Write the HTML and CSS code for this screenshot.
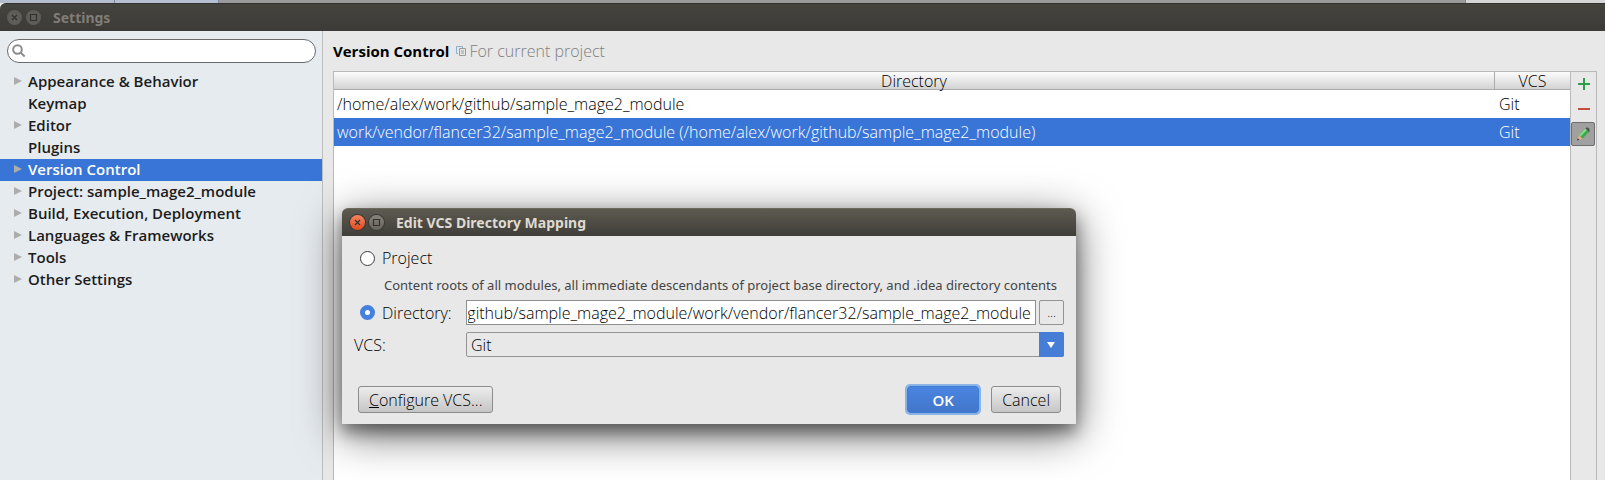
FILE: index.html
```html
<!DOCTYPE html>
<html lang="en">
<head>
<meta charset="utf-8">
<title>Settings</title>
<link rel="stylesheet" href="styles.css">
</head>
<body>
<div class="desktop">
  <div class="desktop-strip"><span class="strip-tab"></span><span class="strip-tab strip-tab-wide"></span><span class="strip-fill"></span><span class="strip-end"></span></div>
  <div class="window">
    <header class="titlebar titlebar-inactive">
      <button class="window-button" type="button" aria-label="Close"><svg viewBox="0 0 15 15"><path d="M5 5l5 5M10 5l-5 5"/></svg></button>
      <button class="window-button" type="button" aria-label="Maximize"><svg viewBox="0 0 15 15"><path d="M4.500 4.500h6v6h-6z"/></svg></button>
      <h1 class="title">Settings</h1>
    </header>
    <div class="body">
      <aside class="sidebar">
        <label class="search">
          <svg class="search-icon" viewBox="0 0 14 14"><circle cx="5.500" cy="5.500" r="4.300"/><path d="M8.700 8.700l4 3.800"/></svg>
          <input class="search-input" type="search" aria-label="Search settings">
        </label>
        <nav class="tree">
          <a class="node branch" href="#">Appearance &amp; Behavior</a>
          <a class="node" href="#">Keymap</a>
          <a class="node branch" href="#">Editor</a>
          <a class="node" href="#">Plugins</a>
          <a class="node branch selected" href="#">Version Control</a>
          <a class="node branch" href="#">Project: sample_mage2_module</a>
          <a class="node branch" href="#">Build, Execution, Deployment</a>
          <a class="node branch" href="#">Languages &amp; Frameworks</a>
          <a class="node branch" href="#">Tools</a>
          <a class="node branch" href="#">Other Settings</a>
        </nav>
      </aside>
      <main class="content">
        <div class="heading">
          <h2 class="heading-title">Version Control</h2>
          <svg class="copy-icon" viewBox="0 0 10 10"><path class="copy-back" d="M2 7.500H.5v-7h6V2"/><path class="copy-front" d="M3.500 2.500h6v7h-6zM5 5h3M5 7h3"/></svg>
          <span class="heading-note">For current project</span>
        </div>
        <div class="panel">
          <div class="table-area">
            <table class="mappings">
              <thead><tr><th>Directory</th><th class="vcs">VCS</th></tr></thead>
              <tbody>
                <tr><td>/home/alex/work/github/sample_mage2_module</td><td>Git</td></tr>
                <tr class="selected"><td>work/vendor/flancer32/sample_mage2_module (/home/alex/work/github/sample_mage2_module)</td><td>Git</td></tr>
              </tbody>
            </table>
          </div>
          <div class="tools">
            <button class="tool" type="button" aria-label="Add"><svg viewBox="0 0 16 16"><path class="plus" d="M2 8h12M8 2v12"/></svg></button>
            <button class="tool" type="button" aria-label="Remove"><svg viewBox="0 0 16 16"><path class="minus" d="M2 8h12"/></svg></button>
            <button class="tool pressed" type="button" aria-label="Edit"><svg viewBox="0 0 16 16"><path fill="#e9b27c" d="M2.500 14l1.500-5 3.500 3.500z"/><path fill="#3c3c3c" d="M2 14.500l.8-2.300 1.500 1.500z"/><path fill="#3fa84a" d="M4 9l6.500-6.500L14 6l-6.500 6.500z"/><path fill="#86dc86" d="M4 9l6.500-6.500 1.500 1.500-6.500 6.500z"/><path fill="#505050" d="M10.500 2.500l1-1H13L14.500 3v2.500l-.5.500z"/></svg></button>
          </div>
        </div>
      </main>
    </div>
  </div>

  <section class="dialog" role="dialog" aria-labelledby="dialog-title">
    <header class="titlebar titlebar-active">
      <button class="window-button close" type="button" aria-label="Close"><svg viewBox="0 0 15 15"><path d="M5 5l5 5M10 5l-5 5"/></svg></button>
      <button class="window-button" type="button" aria-label="Maximize"><svg viewBox="0 0 15 15"><path d="M4.500 4.500h6v6h-6z"/></svg></button>
      <h2 class="title" id="dialog-title">Edit VCS Directory Mapping</h2>
    </header>
    <form class="form">
      <label class="choice"><input class="radio" type="radio" name="scope">Project</label>
      <p class="hint">Content roots of all modules, all immediate descendants of project base directory, and .idea directory contents</p>
      <div class="row">
        <label class="choice row-label"><input class="radio" type="radio" name="scope" checked>Directory:</label>
        <input class="path" id="path" type="text" aria-label="Directory path" value="/home/alex/work/github/sample_mage2_module/work/vendor/flancer32/sample_mage2_module">
        <button class="browse" type="button" aria-label="Browse">...</button>
      </div>
      <div class="row">
        <label class="row-label" for="vcs">VCS:</label>
        <div class="combo">
          <select class="select" id="vcs"><option>Git</option></select>
          <svg class="combo-arrow" viewBox="0 0 25 25"><path d="M8 10h8l-4 6z"/></svg>
        </div>
      </div>
      <div class="actions">
        <button class="button" type="button"><u>C</u>onfigure VCS...</button>
        <button class="button primary" type="button">OK</button>
        <button class="button" type="button">Cancel</button>
      </div>
    </form>
  </section>
</div>
<script src="script.js"></script>
</body>
</html>
```
FILE: styles.css
```css
* { box-sizing: border-box; }

body {
  margin: 0;
  background: #e8e8e8;
  color: #000;
  font: 300 16px/20px "Open Sans", "Noto Sans", sans-serif;
}

h1, h2, p { margin: 0; }
button, input, select { font: inherit; color: inherit; }
button { padding: 0; }

.desktop {
  position: relative;
  display: flex;
  flex-direction: column;
  min-height: 100vh;
  overflow: hidden;
}

.desktop-strip { display: flex; height: 3px; background: #9a9a9a; }
.strip-tab { width: 115px; background: #b3bfcd; border-right: 1px solid #7d879b; }
.strip-tab-wide { width: 104px; background: #b6bfd3; }
.strip-fill { flex: 1; }
.strip-end { width: 140px; background: #d6d6d6; border-left: 1px solid #888; }

.window { display: flex; flex: 1; flex-direction: column; }

.titlebar {
  display: flex;
  align-items: center;
  gap: 4px;
  height: 28px;
  padding-left: 7px;
}
.titlebar-inactive { background: linear-gradient(#44433d, #3c3b37); border-top: 1px solid #33322e; border-radius: 6px 0 0 0; color: #807d78; }
.titlebar-active { padding-left: 8px; background: linear-gradient(#5d5a50, #3f3e39); border-top: 1px solid #6c695c; border-radius: 6px 6px 0 0; color: #dfdbd2; }
.title { margin-left: 8px; font: 700 14px/20px "Noto Sans", sans-serif; }

.window-button {
  width: 15px;
  height: 15px;
  border: 0;
  border-radius: 50%;
  background: #5f5d58;
}
.window-button svg { display: block; fill: none; stroke: #33322e; stroke-width: 1.2; }
.titlebar-active .window-button { background: linear-gradient(#85837b, #65635c); box-shadow: 0 0 0 1px #3a3934; }
.titlebar-active .close { background: linear-gradient(#f58462, #df4b1d); }

.body { display: flex; flex: 1; }

.sidebar {
  width: 323px;
  flex-shrink: 0;
  padding-top: 8px;
  background: #e6ebef;
  border-right: 1px solid #bdbdbd;
}
.search {
  display: flex;
  align-items: center;
  height: 24px;
  margin: 0 6px 8px 7px;
  padding: 0 8px 0 4px;
  border: 1px solid #6b6b6b;
  border-radius: 12px;
  background: #fff;
}
.search-icon { width: 14px; height: 14px; flex-shrink: 0; fill: none; stroke: #8c8c8c; stroke-width: 2; }
.search-input { flex: 1; min-width: 0; height: 20px; border: 0; outline: 0; background: none; }

.tree { display: flex; flex-direction: column; }
.node {
  display: flex;
  align-items: center;
  height: 22px;
  padding: 0 0 2px 28px;
  color: #1c1c1c;
  font-size: 15px;
  font-weight: 600;
  text-decoration: none;
}
.branch { padding-left: 14px; }
.branch::before {
  content: "";
  margin-right: 6px;
  border: solid transparent;
  border-width: 4px 0 4px 8px;
  border-left-color: #adadad;
}
.node.selected { background: #3875d7; color: #fff; }

.content { display: flex; flex: 1; flex-direction: column; padding: 0 8px 0 10px; }
.heading { display: flex; align-items: center; height: 40px; }
.heading-title { font-size: 15px; font-weight: 700; }
.copy-icon { width: 10px; height: 10px; margin: 0 3px 0 7px; fill: none; }
.copy-back { stroke: #86b2cf; }
.copy-front { stroke: #9a9a9a; }
.heading-note { color: #808080; }

.panel {
  display: flex;
  flex: 1;
  border: solid #b9b9b9;
  border-width: 1px 1px 0;
}
.table-area { flex: 1; background: #fff; }
.mappings { width: 100%; border-spacing: 0; table-layout: fixed; }
.mappings th {
  height: 18px;
  padding: 1px 0 0;
  background: linear-gradient(#fdfdfd, #d2d2d2);
  border-bottom: 1px solid #ababab;
  font-weight: 300;
  line-height: 16px;
}
.mappings .vcs { width: 76px; border-left: 1px solid #ababab; }
.mappings td { height: 28px; padding: 0 3px; white-space: nowrap; }
.mappings td + td { padding-left: 5px; }
.mappings .selected td { background: #3875d7; color: #fff; }

.tools {
  display: flex;
  flex-direction: column;
  width: 26px;
  border-left: 1px solid #b9b9b9;
}
.tool {
  display: flex;
  align-items: center;
  justify-content: center;
  height: 25px;
  border: 0;
  background: none;
}
.tool svg { width: 16px; height: 16px; }
.tool:first-child { height: 24px; }
.pressed { width: 24px; height: 24px; margin-top: 1px; border: 1px solid #6e6e6e; border-radius: 2px; background: #a0a0a0; }
.plus, .minus { fill: none; stroke-width: 2; }
.plus { stroke: #2f9e4c; }
.minus { stroke: #c0503f; }

.dialog {
  position: absolute;
  top: 208px;
  left: 342px;
  width: 734px;
  border-radius: 6px 6px 0 0;
  background: #e8e8e8;
  box-shadow: 0 10px 44px rgba(0, 0, 0, .6), 0 8px 16px rgba(0, 0, 0, .4);
}
.form { padding: 12px 12px 11px; }
.choice { display: flex; align-items: center; padding-left: 6px; }
.radio {
  width: 15px;
  height: 15px;
  margin: 0 7px 0 0;
  border: 1px solid #3c3c3c;
  border-radius: 50%;
  background: #fff;
  appearance: none;
}
.radio:checked { border: 5px solid #4480dd; }
.hint {
  margin: 7px 0 5px;
  padding-left: 30px;
  color: #444;
  font: 400 13px/20px "Noto Sans", sans-serif;
  white-space: nowrap;
}
.row { display: flex; align-items: center; height: 25px; margin-bottom: 7px; }
.row-label { width: 112px; flex-shrink: 0; }
.path {
  flex: 1;
  min-width: 0;
  height: 25px;
  padding: 0 4px 0 1px;
  border: 1px solid #8f8f8f;
  background: #fff;
}
.browse {
  width: 25px;
  height: 25px;
  margin-left: 3px;
  border: 1px solid #949494;
  border-radius: 2px;
  background: #e8e8e8;
  font-size: 12px;
  line-height: 16px;
}
.combo { position: relative; flex: 1; height: 25px; }
.select {
  width: 100%;
  height: 25px;
  padding: 0 30px 0 4px;
  border: 1px solid #949494;
  border-radius: 2px;
  background: #e8e8e8;
  appearance: none;
}
.combo-arrow {
  position: absolute;
  top: 0;
  right: 0;
  width: 25px;
  height: 25px;
  border-radius: 0 2px 2px 0;
  background: #467ed7;
  fill: #fff;
  pointer-events: none;
}
.actions { display: flex; gap: 12px; margin-top: 29px; padding: 0 3px 0 4px; }
.button {
  height: 27px;
  padding: 0 10px;
  border: 1px solid #8c8c8c;
  border-radius: 3px;
  background: linear-gradient(#ececec, #c6c6c6);
  line-height: 24px;
}
.primary {
  width: 72px;
  margin-left: auto;
  border-color: #3c7cd4;
  background: linear-gradient(#4a85e0, #4276cb);
  box-shadow: 0 0 0 2px #8bb4e6;
  color: #fff;
  font-size: 15px;
  font-weight: 600;
}
```
FILE: script.js
```js
// Keep the end of a long path in view.
const path = document.getElementById("path");
path.scrollLeft = path.scrollWidth;
```
